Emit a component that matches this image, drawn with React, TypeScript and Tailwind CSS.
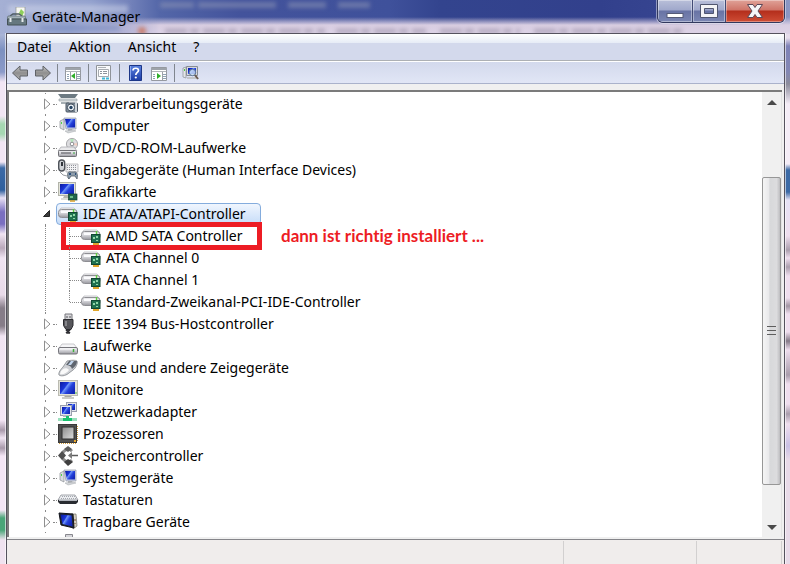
import { useState } from "react";
import type { ReactNode } from "react";

type IconName =
  | "imaging"
  | "computer"
  | "dvd"
  | "hid"
  | "display"
  | "controller"
  | "firewire"
  | "drive"
  | "mouse"
  | "monitor"
  | "network"
  | "cpu"
  | "storage"
  | "keyboard"
  | "portable";

type Device = {
  name: string;
  icon: IconName;
  children?: string[];
};

const DEVICES: Device[] = [
  { name: "Bildverarbeitungsgeräte", icon: "imaging" },
  { name: "Computer", icon: "computer" },
  { name: "DVD/CD-ROM-Laufwerke", icon: "dvd" },
  { name: "Eingabegeräte (Human Interface Devices)", icon: "hid" },
  { name: "Grafikkarte", icon: "display" },
  {
    name: "IDE ATA/ATAPI-Controller",
    icon: "controller",
    children: ["AMD SATA Controller", "ATA Channel 0", "ATA Channel 1", "Standard-Zweikanal-PCI-IDE-Controller"],
  },
  { name: "IEEE 1394 Bus-Hostcontroller", icon: "firewire" },
  { name: "Laufwerke", icon: "drive" },
  { name: "Mäuse und andere Zeigegeräte", icon: "mouse" },
  { name: "Monitore", icon: "monitor" },
  { name: "Netzwerkadapter", icon: "network" },
  { name: "Prozessoren", icon: "cpu" },
  { name: "Speichercontroller", icon: "storage" },
  { name: "Systemgeräte", icon: "computer" },
  { name: "Tastaturen", icon: "keyboard" },
  { name: "Tragbare Geräte", icon: "portable" },
];

const MENU = ["Datei", "Aktion", "Ansicht", "?"];

function Gradients() {
  return (
    <svg className="absolute h-0 w-0" aria-hidden="true">
      <defs>
        <linearGradient id="screen" x1="0" y1="0" x2="1" y2="0.6">
          <stop offset="0" stopColor="#0a1a9c" />
          <stop offset="0.42" stopColor="#1a36dc" />
          <stop offset="0.5" stopColor="#6f96f8" />
          <stop offset="0.7" stopColor="#2442dc" />
          <stop offset="1" stopColor="#1428b8" />
        </linearGradient>
        <linearGradient id="metal" x1="0" y1="0" x2="0" y2="1">
          <stop offset="0" stopColor="#f4f4f6" />
          <stop offset="0.5" stopColor="#cfcfd4" />
          <stop offset="1" stopColor="#98989e" />
        </linearGradient>
        <linearGradient id="chip" x1="0" y1="0" x2="1" y2="1">
          <stop offset="0" stopColor="#8a8a8a" />
          <stop offset="1" stopColor="#dedede" />
        </linearGradient>
        <linearGradient id="arrow" x1="0" y1="0" x2="0" y2="1">
          <stop offset="0" stopColor="#c4c4c4" />
          <stop offset="0.5" stopColor="#8f8f8f" />
          <stop offset="1" stopColor="#b4b4b4" />
        </linearGradient>
        <linearGradient id="help" x1="0" y1="0" x2="0" y2="1">
          <stop offset="0" stopColor="#5a82e0" />
          <stop offset="1" stopColor="#1c3ca6" />
        </linearGradient>
      </defs>
    </svg>
  );
}

/* Device icons, all on a 20x20 grid */
const ICONS: Record<IconName, ReactNode> = {
  imaging: (
    <>
      <path d="M0 0h20l-3 4H3z" fill="#6d7a82" />
      <path d="M1 5h18v2H1z" fill="#d8dde0" stroke="#8b9499" strokeWidth="0.6" />
      <path d="M3 8h8v2H3z" fill="#a6afb4" />
      <rect x="8" y="9" width="11.5" height="9" rx="1" fill="#8493a1" stroke="#4c5762" />
      <circle cx="13" cy="13.5" r="3.6" fill="#f0f5fa" stroke="#3f4c58" />
      <circle cx="13" cy="13.5" r="1.7" fill="#23415f" />
      <path d="M17 8h2v10h-2z" fill="#cfd5da" />
    </>
  ),
  computer: (
    <>
      <path d="M2 5l4-2v11l-4-2z" fill="#d9dcdf" stroke="#898e93" strokeWidth="0.7" />
      <path d="M3 6h1v2H3z" fill="#4fd54a" />
      <path d="M6 2h12v11l-10 0z" fill="#c9d2ea" stroke="#9298a6" strokeWidth="0.7" />
      <path d="M7 3h10v8.5l-8 0z" fill="url(#screen)" />
      <path d="M10 13h4l1 2-5 1z" fill="#a9adb2" />
      <path d="M7 15l8-1 3 1-8 2z" fill="#d3d6d9" stroke="#a2a6aa" strokeWidth="0.5" />
    </>
  ),
  dvd: (
    <>
      <circle cx="14" cy="6" r="5.6" fill="#dcdcdf" stroke="#98989c" strokeWidth="0.8" />
      <path d="M14 6l-2-5 4 0z" fill="#b6e3bb" />
      <path d="M14 6l5-1v3z" fill="#f2cfc4" />
      <circle cx="14" cy="6" r="1.8" fill="#fff" stroke="#77777c" strokeWidth="0.8" />
      <path d="M3 9h13l3 4H0z" fill="#e9e9eb" stroke="#a2a2a7" strokeWidth="0.7" />
      <rect x="0.5" y="12.5" width="18" height="6" rx="1" fill="url(#metal)" stroke="#707075" />
      <path d="M3 15h10" stroke="#4d4d52" />
      <path d="M15 15h2" stroke="#35a338" />
    </>
  ),
  hid: (
    <>
      <path d="M8 4h12v8H8z" fill="#f2f2f4" stroke="#a6a6ab" strokeWidth="0.7" />
      <path d="M9 5.500h10M9 7.500h10M9 9.500h10" stroke="#8f9298" strokeDasharray="1 1" />
      <rect x="0.7" y="0" width="6" height="11" rx="3" fill="#cfd2d6" stroke="#4e5259" strokeWidth="1.4" />
      <path d="M3 2h2v4H3z" fill="#2f333a" />
      <path d="M10 18c-1-5 0-7 3-6h3c3-1 4 3 3 7l-2-3h-4l-2 3z" fill="#8e9dac" stroke="#4f5a66" strokeWidth="0.8" />
      <path d="M11 14h2M17 14h1" stroke="#2b4d78" strokeWidth="2" />
      <path d="M2 12l3 3 4 1" fill="none" stroke="#9a9da2" />
    </>
  ),
  display: (
    <>
      <rect x="0.5" y="0.5" width="17" height="13" fill="#e3e4da" stroke="#b2b4a9" />
      <rect x="2" y="2" width="14" height="10" fill="url(#screen)" />
      <path d="M6 14h5l1 2H5z" fill="#b5b7b0" />
      <path d="M3 16h9v2H3z" fill="#dcddd8" />
      <rect x="10.5" y="12" width="8.500" height="6" fill="#23654b" stroke="#12402d" strokeWidth="0.7" />
      <path d="M12 14h3v2h-3z" fill="#6cc08a" />
      <path d="M12 19h5" stroke="#d6a02c" strokeWidth="1.5" />
    </>
  ),
  controller: (
    <>
      <path d="M3 4h13l3 3H1z" fill="#f1f1f3" stroke="#b5b5ba" strokeWidth="0.7" />
      <rect x="0.5" y="5.5" width="18.5" height="8" rx="3" fill="url(#metal)" stroke="#8e8e93" />
      <path d="M3 8h12" stroke="#fbfbfd" strokeWidth="2" />
      <path d="M15.500 5v3" stroke="#5fce3e" strokeWidth="1.4" />
      <rect x="10.500" y="8.5" width="8.500" height="8" fill="#20714f" stroke="#114733" />
      <path d="M12 11h2v2h-2zM15 10h2v2h-2zM15 14h2v1h-2z" fill="#8fd6a8" />
      <path d="M12 18h6" stroke="#dfa62c" strokeWidth="2" />
    </>
  ),
  firewire: (
    <>
      <path d="M7 0h7v6H7z" fill="#d9d9dc" stroke="#77777c" />
      <path d="M9 2v2M12 2v2" stroke="#55555a" />
      <path d="M5.5 5.5h9.500v6l-2 4H8l-2.500-4z" fill="#56565b" stroke="#2c2c30" />
      <path d="M8 7v5" stroke="#b5b5ba" />
      <path d="M8 16l4 3M12 16l-4 3M9 19h3" stroke="#2f2f33" strokeWidth="1.6" />
    </>
  ),
  drive: (
    <>
      <path d="M4 8h12l3 4H1z" fill="#f6f6f8" stroke="#b5b5ba" strokeWidth="0.7" />
      <rect x="0.5" y="11.5" width="19" height="6.500" rx="1.500" fill="url(#metal)" stroke="#77777d" />
      <path d="M2 13h13" stroke="#fafafc" />
      <path d="M15.500 13v3" stroke="#3fb03a" strokeWidth="1.5" />
    </>
  ),
  mouse: (
    <>
      <path d="M9 3c4-1 9-1 10 0 1 2-1 7-4 9l-4 3c-2 2-7 4-10 2-1-2 2-6 4-8z" fill="#cfd1d5" stroke="#83868c" strokeWidth="0.8" />
      <path d="M11 3h8c0 3-2 6-5 8-1-3-3-4-6-4z" fill="#5f656e" />
      <path d="M13 3h3l-3 4h-3z" fill="#c2d6ee" />
      <path d="M3 13c2-3 6-4 8-1-2 3-6 5-9 4z" fill="#fafafa" />
    </>
  ),
  monitor: (
    <>
      <rect x="0.5" y="0.5" width="19" height="15" fill="#e2e2d8" stroke="#bbbbb1" />
      <rect x="2" y="2" width="15" height="12" fill="url(#screen)" />
      <path d="M18 12v2" stroke="#48bd45" />
      <path d="M7 16h6l1 1H6z" fill="#aaaaa3" />
      <path d="M4 17h12v2H4z" fill="#cccdc8" />
    </>
  ),
  network: (
    <>
      <rect x="8.5" y="0.5" width="10" height="9" fill="#e2e5ec" stroke="#9a9fae" />
      <rect x="10" y="2" width="7" height="6" fill="url(#screen)" />
      <rect x="2.5" y="3.5" width="11" height="10" fill="#e2e5ec" stroke="#9a9fae" />
      <rect x="4" y="5" width="8" height="7" fill="url(#screen)" />
      <path d="M5 14h6" stroke="#b5b9c2" strokeWidth="2" />
      <path d="M0 17.500h19" stroke="#9ae0bd" strokeWidth="3" />
      <path d="M5 17.500h9M9.500 14v4" stroke="#18c26f" strokeWidth="3" />
    </>
  ),
  cpu: (
    <>
      <path d="M1 19.500h17M19.500 2v16" stroke="#cf9b3c" strokeDasharray="1 1" />
      <rect x="0.5" y="0.5" width="18" height="18" fill="#505050" stroke="#3a3a3a" />
      <rect x="4" y="3" width="12" height="12" fill="url(#chip)" stroke="#2f2f2f" />
      <path d="M16 16h2v2h-2z" fill="#e8a62b" />
    </>
  ),
  storage: (
    <>
      <path d="M14 5A6 6 0 1 0 14 14" fill="none" stroke="#8c8c8c" strokeWidth="3" />
      <path d="M10 0l4 3-4 3-4-3z" fill="#5c5c5c" />
      <path d="M4 5l4 4.500-4 4.500-4-4.500z" fill="#505050" />
      <path d="M10 13l5 3-5 4-4-4z" fill="#3f3f3f" />
      <path d="M12 9.500h8" stroke="#5c5c5c" strokeWidth="1.5" />
      <path d="M14 6l-4 3.500 4 3.500z" fill="#7a7a7a" />
    </>
  ),
  keyboard: (
    <>
      <path d="M3 5h14l3 5H0z" fill="#eceef1" stroke="#8e9197" strokeWidth="0.8" />
      <path d="M4 6.500h13M3 8.500h15" stroke="#a3a6ad" strokeDasharray="1 1" />
      <path d="M0 10h20v2l-2 2H2l-2-2z" fill="#292c31" />
      <path d="M1 10.500h18" stroke="#b2b6bd" />
    </>
  ),
  portable: (
    <>
      <path d="M13 2h5l1 12-4 3z" fill="#d5d0c1" stroke="#77736a" strokeWidth="0.7" />
      <path d="M1 1l14 1 1 14-13-3z" fill="#20242f" stroke="#10131b" />
      <path d="M2.500 2.500l11 1 1 11-10-2.500z" fill="url(#screen)" />
      <path d="M17 7v2M17 11v1" stroke="#7b4f2a" />
    </>
  ),
};

function DeviceIcon({ name }: { name: IconName }) {
  return (
    <svg viewBox="0 0 20 20" className="h-5 w-5 shrink-0 overflow-visible" aria-hidden="true">
      {ICONS[name]}
    </svg>
  );
}

/* Blurred windows shining through the glass frame */
function Backdrop() {
  return (
    <div aria-hidden="true" className="absolute inset-0 overflow-hidden bg-[#f0e3f0]">
      <div className="flex h-full justify-between">
        <div className="w-2 bg-[linear-gradient(#a9b4d6_0px,#a9b4d6_35px,#7c90c0_50px,#8b9ac8_72px,#f2e6f4_82px,#f2e6f4_116px,#a6d8b2_124px,#a6d8b2_134px,#f2e6f4_142px,#f2e6f4_162px,#3c6aa6_168px,#2f5f9d_190px,#e8e0f4_198px,#7a6fc0_212px,#7a6fc0_224px,#f0e4f2_234px,#b9a8ba_248px,#f0e4f2_258px,#e8dae8_295px,#867d88_308px,#867d88_326px,#f0e4f2_336px,#f4e6f5_420px,#a899aa_430px,#f0e4f2_438px,#a899aa_448px,#f4e6f5_456px,#f4e6f5_510px,#4aa578_518px,#4aa578_530px,#f0e3f0_540px)]" />
        <div className="w-2 bg-[linear-gradient(#e6dcec_0px,#e6dcec_38px,#7f83b8_46px,#8387b4_72px,#8c8c9c_84px,#f4ecf6_104px,#f4ecf6_164px,#3c6aa6_170px,#3c6aa6_192px,#e6e2f5_200px,#efdeee_236px,#ab9fae_250px,#efdeee_258px,#ab9fae_267px,#efdeee_276px,#efdeee_298px,#a296a4_306px,#efdeee_314px,#efdeee_332px,#857a88_341px,#efdeee_350px,#a99dac_375px,#efdeee_384px,#efdeee_404px,#a99dac_414px,#efdeee_424px,#c9c0e4_446px,#e8dae8_460px,#e8dae8_564px)]" />
      </div>
      <div className="absolute inset-x-0 top-0 h-[34px] bg-[linear-gradient(90deg,#a5b0d4_0px,#94a2ce_90px,#7382ba_130px,#5366a8_160px,#43539c_240px,#3f519b_390px,#33448e_440px,#32408c_600px,#3a4894_720px,#8d98c4_790px)]" />
      <div className="absolute inset-x-0 top-0 h-[34px] bg-[linear-gradient(transparent_17px,#d9cee2_25px,#dcd2e6_33px)] [mask-image:linear-gradient(90deg,transparent_70px,#000_160px)]" />
      <svg className="absolute left-0 top-0 h-[34px] w-full">
        <g className="blur-[2px]">
          <path d="M160 5h34M198 5h78M288 5h38M338 5h32" stroke="#8d94b4" strokeWidth="6" opacity="0.55" />
          <path d="M8 9h120" stroke="#d2d8ec" strokeWidth="8" opacity="0.5" />
          <path d="M40 28h80" stroke="#6f83bc" strokeWidth="5" opacity="0.5" />
          <path d="M165 31h160M336 31h90M440 31h80M534 31h150" stroke="#8d8198" strokeWidth="4" opacity="0.55" strokeDasharray="22 3 9 4" />
          <circle cx="142" cy="31" r="4" fill="#c98070" />
        </g>
      </svg>
    </div>
  );
}

function CaptionButtons() {
  const glass =
    "bg-[linear-gradient(#b9bfd9_0px,#a0a8cb_10px,#6873a4_11px,#7a85b2_21px)] shadow-[inset_0_0_0_1px_rgba(255,255,255,0.4)]";
  return (
    <div className="flex h-[23px] shrink-0 overflow-hidden rounded-b-md border border-t-0 border-[#32395e] shadow-[0_0_0_1px_rgba(255,255,255,0.45)]">
      <button aria-label="Minimieren" className={`flex w-[35px] items-center justify-center border-r border-[#414a74] ${glass}`}>
        <svg viewBox="0 0 18 16" className="h-4 w-[18px]">
          <rect x="1" y="10.5" width="16" height="4" fill="#fff" stroke="#555b77" />
        </svg>
      </button>
      <button aria-label="Maximieren" className={`flex w-[33px] items-center justify-center border-r border-[#414a74] ${glass}`}>
        <svg viewBox="0 0 18 16" className="h-4 w-[18px]">
          <path d="M0.500 1.500h17v13H0.500zM4.500 5.500h9v5h-9z" fill="#f4f4f6" stroke="#50566f" fillRule="evenodd" />
        </svg>
      </button>
      <button
        aria-label="Schließen"
        className="flex w-[58px] items-center justify-center bg-[linear-gradient(#e0a298_0px,#cf7468_10px,#b42e1c_11px,#cc4a33_21px)] shadow-[inset_0_0_0_1px_rgba(255,255,255,0.35)]"
      >
        <svg viewBox="0 0 16 16" className="h-4 w-4">
          <path
            d="M0.500 1.500h5.500l2 3 2-3h5.500l-4.500 6.500 4.500 6.500H10l-2-3-2 3H0.500L5 8z"
            fill="#f5f5f7"
            stroke="#5c4756"
          />
        </svg>
      </button>
    </div>
  );
}

function ToolButton({ label, children }: { label: string; children: ReactNode }) {
  return (
    <button aria-label={label} title={label} className="flex h-[18px] w-[18px] items-center justify-center">
      <svg viewBox="0 0 18 18" className="h-[18px] w-[18px]">
        {children}
      </svg>
    </button>
  );
}

function Separator() {
  return <span className="h-[18px] w-px bg-[#80868f]" />;
}

function Toolbar() {
  return (
    <div className="flex h-[23px] items-center border-b border-[#aab2cb] border-t border-t-white bg-linear-to-b from-[#d3d9ec] to-[#e1e6f6] pl-1">
      <div className="flex gap-[5px]">
        <ToolButton label="Zurück">
          <path d="M1.500 9L9 2v4h7.500v6H9v4z" fill="url(#arrow)" stroke="#5f6267" />
        </ToolButton>
        <ToolButton label="Vorwärts">
          <path d="M16.500 9L9 2v4H1.500v6H9v4z" fill="url(#arrow)" stroke="#5f6267" />
        </ToolButton>
      </div>
      <div className="ml-[5px] flex items-center gap-[6px]">
        <Separator />
        <ToolButton label="Konsolenstruktur">
          <path d="M1.500 3.500h15v13h-15z" fill="#fff" stroke="#9599a0" />
          <path d="M1 4h16v2H1z" fill="#9ea3aa" />
          <path d="M2 7.500h14" stroke="#b1b5ba" />
          <path d="M3 10.500h2M3 12.500h2M3 14.500h2M13 10.500h3M13 12.500h3M13 14.500h3" stroke="#8fa3b5" />
          <path d="M11 9v6l-4-3z" fill="#2fae2a" />
          <path d="M6.500 8v8M12.500 8v8" stroke="#9da1a7" />
        </ToolButton>
        <Separator />
        <ToolButton label="Eigenschaften">
          <path d="M1.500 1.500h14v15h-14z" fill="#f8f9fb" stroke="#8f9399" />
          <path d="M3.500 5.500h10v7h-10z" fill="#fff" stroke="#a6aab0" />
          <path d="M3 3.500h8" stroke="#aeb2b8" />
          <path d="M5 7.500h2M8 7.500h4M5 9.500h2M8 9.500h4" stroke="#8d929a" />
          <path d="M7 14.500h3M11 14.500h3" stroke="#3eb8d8" strokeWidth="2" />
        </ToolButton>
        <Separator />
        <ToolButton label="Hilfe">
          <path d="M3.500 1.500h12v15h-12z" fill="url(#help)" stroke="#1d3788" />
          <path d="M4.500 2v14" stroke="#8ba7ec" />
          <path d="M7 6.500c0-3 5.500-3 5.500 0 0 2-2.700 2-2.700 4.500" fill="none" stroke="#fff" strokeWidth="1.700" />
          <circle cx="9.800" cy="13.500" r="1.100" fill="#fff" />
        </ToolButton>
        <ToolButton label="Aktionsbereich">
          <path d="M1.500 3.500h15v13h-15z" fill="#fff" stroke="#9599a0" />
          <path d="M1 4h16v2H1z" fill="#9ea3aa" />
          <path d="M2 7.500h14" stroke="#b1b5ba" />
          <path d="M3 10.500h2M3 12.500h2M3 14.500h2M13 10.500h3M13 12.500h3M13 14.500h3" stroke="#8fa3b5" />
          <path d="M7 9v6l4-3z" fill="#2fae2a" />
          <path d="M12.500 8v8" stroke="#9da1a7" />
        </ToolButton>
        <Separator />
        <ToolButton label="Nach geänderter Hardware suchen">
          <path d="M2 4l3-1v11l-3-1z" fill="#e3e5e8" stroke="#8b9096" strokeWidth="0.7" />
          <path d="M3 5h1v2H3z" fill="#4cca48" />
          <path d="M5.500 2.500h11v9h-11z" fill="#d6d9dd" stroke="#888d95" />
          <path d="M7 4h8v6H7z" fill="url(#screen)" />
          <path d="M6 14h9" stroke="#c3c6ca" strokeWidth="2" />
          <circle cx="11.500" cy="8.500" r="3.200" fill="#cfe3f7" fillOpacity="0.8" stroke="#5c7696" />
          <path d="M14 11l3 4" stroke="#6b5c50" strokeWidth="2" />
        </ToolButton>
      </div>
    </div>
  );
}

function Expander({ name, open, onToggle }: { name: string; open: boolean; onToggle: () => void }) {
  return (
    <button aria-label={`${name} ${open ? "zuklappen" : "aufklappen"}`} aria-expanded={open} onClick={onToggle} className="h-[22px] w-3 shrink-0">
      <svg viewBox="0 0 12 22" className="h-[22px] w-3">
        {open ? (
          <path d="M8.500 7.500v6h-6z" fill="#3b3b3b" stroke="#262626" />
        ) : (
          <path d="M3.500 6v10l5.500-5z" fill="#fff" stroke="#8f8f8f" />
        )}
        <path d="M4.500 0v1M4.500 21v1" stroke="#8a8a8a" />
      </svg>
    </button>
  );
}

function TreeNode({ device }: { device: Device }) {
  const [open, setOpen] = useState(Boolean(device.children));
  const selected = device.icon === "controller";

  return (
    <li>
      <div className="flex h-[22px] items-center pl-8">
        <Expander name={device.name} open={open} onToggle={() => setOpen(!open)} />
        <span className={`w-1 border-t border-dotted ${selected ? "border-transparent" : "border-[#8a8a8a]"}`} />
        <span
          className={`-ml-px flex h-[22px] items-center gap-[5px] whitespace-nowrap rounded-sm border pl-px pr-[14px] ${
            selected ? "border-[#84acdd] bg-linear-to-b from-[#f0f6fe] to-[#c6dcf8]" : "border-transparent"
          }`}
        >
          <DeviceIcon name={device.icon} />
          {device.name}
        </span>
      </div>
      {open && device.children && (
        <ul className="ml-9 border-l border-dotted border-[#8a8a8a] pl-[23px]">
          {device.children.map((child, i) => (
            <li key={child} className="relative flex h-[22px] items-center whitespace-nowrap">
              <span
                className={`w-px self-start border-l border-dotted border-[#8a8a8a] ${
                  i === device.children!.length - 1 ? "h-[11px]" : "h-[22px]"
                }`}
              />
              <span className="w-[11px] border-t border-dotted border-[#8a8a8a]" />
              <DeviceIcon name={device.icon} />
              <span className="ml-[5px]">{child}</span>
              {i === 0 && (
                <>
                  <span className="absolute -inset-y-[3px] -left-[8px] w-[201px] border-5 border-[#ed1c24]" />
                  <strong className="absolute left-[212px] font-[Lato,'Noto_Sans',sans-serif] text-[17px] font-bold text-[#ed1c24] [font-variant-ligatures:none]">
                    dann ist richtig installiert ...
                  </strong>
                </>
              )}
            </li>
          ))}
        </ul>
      )}
    </li>
  );
}

function Scrollbar() {
  return (
    <div className="flex w-5 shrink-0 flex-col border-r border-[#e3e3e3] bg-[#f0f0f0]">
      <button aria-label="Nach oben" className="flex h-5 shrink-0 items-center justify-center">
        <svg viewBox="0 0 10 5" className="h-[5px] w-[10px]">
          <path d="M5 0l5 5H0z" fill="#4a4a4a" />
        </svg>
      </button>
      <div className="flex-[65]" />
      <div className="flex flex-[308] flex-col items-center justify-center gap-[3px] rounded-xs border border-[#979797] bg-[linear-gradient(90deg,#f5f5f5,#e9e9eb_35%,#d7d8da_40%,#dcdcde_80%,#bdbdc0)]">
        <span className="h-px w-[9px] bg-[#5e5e5e]" />
        <span className="h-px w-[9px] bg-[#5e5e5e]" />
        <span className="h-px w-[9px] bg-[#5e5e5e]" />
      </div>
      <div className="flex-[32]" />
      <button aria-label="Nach unten" className="flex h-5 shrink-0 items-center justify-center">
        <svg viewBox="0 0 10 5" className="h-[5px] w-[10px]">
          <path d="M0 0h10l-5 5z" fill="#4a4a4a" />
        </svg>
      </button>
    </div>
  );
}

export default function App() {
  return (
    <div className="relative flex h-screen flex-col overflow-hidden font-['Noto_Sans','Liberation_Sans',sans-serif] text-sm text-black">
      <Gradients />
      <Backdrop />

      {/* Title bar */}
      <header className="relative flex h-[33px] shrink-0 items-start justify-between pl-[7px] pr-[5px]">
        <div className="flex h-[33px] items-center gap-[5px]">
          <svg viewBox="0 0 20 20" className="h-5 w-5" aria-hidden="true">
            <path d="M9 0h9v10H9z" fill="#f7f7f2" stroke="#8e9390" strokeWidth="0.7" />
            <path d="M12 6l2-4 3 3-2 5z" fill="#8fcf5c" />
            <path d="M3 9l3-2h6l3 2" fill="none" stroke="#4e5b60" strokeWidth="1.5" />
            <path d="M1 9h17l1 3H0z" fill="#a4b2b8" stroke="#5f6d73" strokeWidth="0.7" />
            <path d="M0.500 12h19v6H0.500z" fill="#66787f" stroke="#455257" />
            <path d="M3.500 11v4M15.500 11v4" stroke="#e6ebed" strokeWidth="2" />
          </svg>
          <h1 className="whitespace-nowrap">Geräte-Manager</h1>
        </div>
        <CaptionButtons />
      </header>

      <main className="relative ml-[5px] mr-[4px] flex min-h-0 flex-1 flex-col border-x border-white/60">
        <div className="flex min-h-0 flex-1 flex-col border-x border-t border-[#55525e] bg-[#f0f0f0]">
          <nav className="flex h-[27px] shrink-0 items-center gap-[17px] border-b border-[#adb0b4] bg-[linear-gradient(#ffffff_0px,#e6ecf6_9px,#d3d9ec_9px)] pl-[10px]">
            {MENU.map((item) => (
              <button key={item}>{item}</button>
            ))}
          </nav>
          <Toolbar />

          {/* Device tree */}
          <div className="mr-[2px] mt-[6px] flex min-h-0 flex-1 border-l-2 border-t-2 border-[#7b7b7b] bg-white">
            <ul className="min-w-0 flex-1 overflow-hidden pt-px">
              {DEVICES.map((device) => (
                <TreeNode key={device.name} device={device} />
              ))}
              <li className="flex pl-[56px] pt-px" aria-hidden="true">
                <svg viewBox="0 0 8 10" className="h-[10px] w-2">
                  <path d="M0.500 0.500h7v9h-7z" fill="#d5d5d9" stroke="#88888e" />
                </svg>
              </li>
            </ul>
            <Scrollbar />
          </div>

          {/* Status bar */}
          <footer className="mt-[2px] flex h-[25px] shrink-0 border-t border-[#85858a] bg-[#f0edec] pr-[2px] pt-px">
            <div className="flex-1 border-r border-[#d2d0d0]" />
            <div className="w-[133px] border-r border-[#d2d0d0]" />
            <div className="w-[85px] border-r border-[#d2d0d0]" />
          </footer>
        </div>
      </main>
    </div>
  );
}
